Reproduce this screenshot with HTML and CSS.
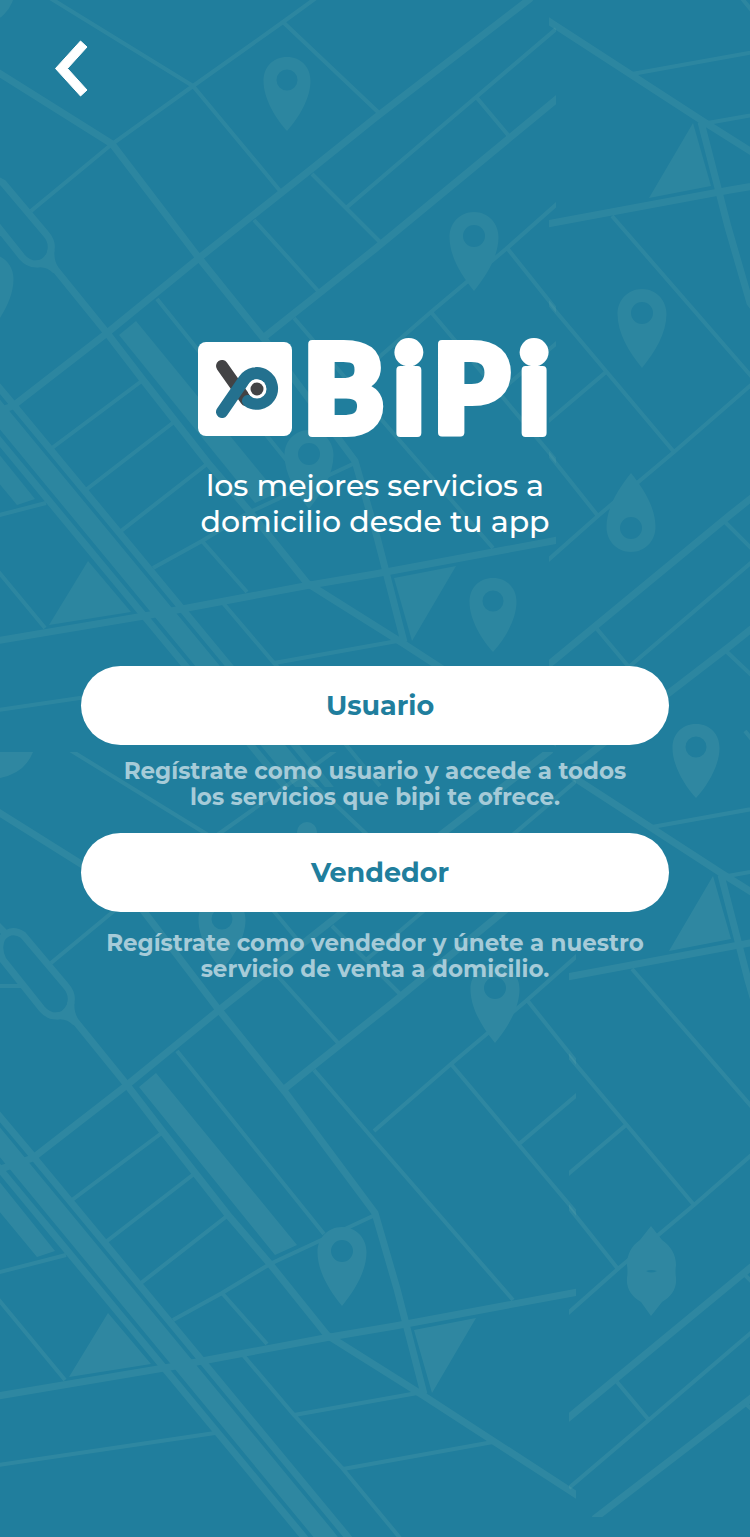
FILE: index.html
```html
<!DOCTYPE html>
<html lang="es">
<head>
<meta charset="utf-8">
<meta name="viewport" content="width=device-width, initial-scale=1">
<title>BiPi</title>
<link rel="stylesheet" href="styles.css">
</head>
<body>
<div class="screen">
  <svg class="map" viewBox="0 0 750 1537" preserveAspectRatio="xMidYMin slice" aria-hidden="true">
    <defs>
      <clipPath id="half"><rect x="-40" y="0" width="596" height="787"/></clipPath>
      <clipPath id="canvas"><rect x="0" y="0" width="750" height="1537"/></clipPath>
      <g id="streets" clip-path="url(#half)">
        <g class="street street-thin">
          <path d="M50-2L193 86M31 211L112 144L193 86L283 22L316-2M283 22L378 112M193 86L281 192"/>
          <path d="M556 29L475 98L346 208M477 98L508 135M312 174L380 242M254 220L319 292M157 299L304 482"/>
          <path d="M294 318L354 388L493 548M558 203L506 249L431 312L354 379M507 248L558 312M431 312L558 463M558 342L499 392"/>
          <path d="M-22 234H4M143 380L52 448M174 422L87 489M207 464L121 531M153 568L202 541L250 512L355 463M202 541L247 592"/>
          <path d="M46 503L-24 521M-22 547L45 628M223 603L274 663L403 640M274 663L323 717L380 786M323 717L473 690M-22 713L195 681"/>
        </g>
        <g class="street">
          <path d="M-25 58L112 144L199 258L265 340L355 461L377 537L404 642"/>
          <path d="M531-2L375 118L314 167L199 258L107 333L13 406L-22 418M558 98L375 249L263 338"/>
          <path d="M46 234Q54 243 50 254Q45 264 36 264Q28 264 22 257L-17 208Q-23 196-18 186Q-9 175 3 183ZM-28 168L-16 180"/>
          <path d="M51 250Q50 262 56 270L107 333L143 380L208 463L250 512L307 583L404 644L558 744"/>
          <path d="M36 264Q48 262 56 271M-22 644L150 615L310 585L375 574L558 540"/>
          <path d="M-36 398L283 784L290 793M7 397L327 784L334 793M-25 359L7 397"/>
        </g>
        <path class="avenue" d="M-36 371L305 784L312 793"/>
        <path class="block" d="M136 321L119 335L255 503L277 493ZM-30 418L-30 448L17 505L35 499ZM88 561L49 625L131 612ZM394 578L456 566L412 641Z"/>
      </g>
      <path id="pin" fill-rule="evenodd" d="M0-25C-14-25-24.500-14-24.500 0C-24.500 19-13 38 0 54C13 38 24.500 19 24.500 0C24.500-14 14-25 0-25ZM0-12A11 11 0 1 1 0 10A11 11 0 1 1 0-12Z"/>
      <path id="pin-small" fill-rule="evenodd" d="M0-23C-14-23-23.500-13-23.500 1C-23.500 18-12 38 0 51C12 38 23.500 18 23.500 1C23.500-13 14-23 0-23ZM0-10.500A10.500 10.500 0 1 1 0 10.500A10.500 10.500 0 1 1 0-10.500Z"/>
    </defs>
    <g clip-path="url(#canvas)">
      <g class="layer">
        <use href="#streets"/>
        <circle cx="-22" cy="-12" r="37"/>
        <use href="#pin-small" x="287" y="80"/>
        <use href="#pin-small" x="493" y="601"/>
        <use href="#pin" x="474" y="237"/>
        <use href="#pin" x="309" y="455"/>
        <use href="#pin" x="-11" y="279"/>
      </g>
      <g class="layer">
        <use href="#streets" transform="matrix(-1 0 0 -1 1105 764)"/>
        <use href="#pin" x="642" y="314"/>
        <use href="#pin" transform="translate(631 527) rotate(180)"/>
      </g>
      <g class="layer layer-low">
        <use href="#streets" x="20" y="752"/>
        <path d="M0 752H33Q25 773 0 778Z"/>
        <circle cx="307" cy="832" r="10"/>
        <use href="#pin-small" x="222" y="919"/>
        <use href="#pin" x="495" y="989"/>
        <use href="#pin" x="342" y="1252"/>
      </g>
      <g class="layer layer-low">
        <use href="#streets" transform="matrix(-1 0 0 -1 1125 1517)"/>
        <use href="#pin-small" x="696" y="747"/>
        <path fill-rule="evenodd" d="M651 1226L640 1240C631 1246 627 1255 627 1265Q628 1271 627 1278C626 1289 632 1297 641 1302L651 1316L662 1302C671 1297 677 1289 676 1278Q675 1271 676 1265C676 1255 671 1246 662 1240ZM646 1271Q651 1269 657 1271Q651 1274 646 1271Z"/>
      </g>
    </g>
  </svg>

  <header class="topbar">
    <button class="back" type="button" aria-label="Volver">
      <svg class="back-icon" viewBox="0 0 32 55" aria-hidden="true"><path d="M25.500 0L32 6L12.500 27.500L32 49L25.500 55L0.500 27.500Z"/></svg>
    </button>
  </header>

  <main class="content">
    <h1 class="brand">
      <svg class="brand-logo" viewBox="198 341 354 96" role="img" aria-label="BiPi">
        <rect class="brand-white" x="198" y="342" width="94" height="94" rx="8"/>
        <path class="brand-rod" d="M222 366L246 400"/>
        <path class="brand-loop" d="M222 412L244 380A15.300 15.300 0 1 1 248 401"/>
        <circle class="brand-white" cx="257" cy="389" r="9.500"/>
        <circle class="brand-dark" cx="257" cy="389" r="6.500"/>
        <text class="brand-name" x="303" y="433" dx="0 10 9 9">BiPi</text>
      </svg>
    </h1>
    <p class="tagline">los mejores servicios a<br>domicilio desde tu app</p>

    <div class="options">
      <section class="option">
        <button class="choice" type="button" aria-describedby="user-note">Usuario</button>
        <p class="note" id="user-note">Regístrate como usuario y accede a todos<br>los servicios que bipi te ofrece.</p>
      </section>
      <section class="option option-seller">
        <button class="choice" type="button" aria-describedby="seller-note">Vendedor</button>
        <p class="note" id="seller-note">Regístrate como vendedor y únete a nuestro<br>servicio de venta a domicilio.</p>
      </section>
    </div>
  </main>
</div>
</body>
</html>
```

FILE: styles.css
```css
* {
  box-sizing: border-box;
}

body {
  margin: 0;
  background: #207e9d;
  color: #fff;
  font-family: Montserrat, Inter, "Open Sans", sans-serif;
}

.screen {
  position: relative;
  min-height: 100vh;
  overflow: hidden;
}

.map {
  position: absolute;
  inset: 0;
  width: 100%;
  height: 100%;
}

.layer {
  opacity: 0.08;
  fill: #b6e2c3;
  stroke: none;
}

.layer-low {
  opacity: 0.09;
  fill: #c2e8cc;
}

.street,
.avenue {
  fill: none;
  stroke: #bce5c8;
  stroke-width: 7;
}

.street-thin {
  stroke-width: 4;
}

.avenue {
  stroke-width: 19;
}

.topbar,
.content {
  position: relative;
}

.topbar {
  display: flex;
  padding: 41px 55px 0;
}

.back {
  display: flex;
  padding: 0;
  border: 0;
  background: none;
  cursor: pointer;
}

.back-icon {
  width: 32px;
  height: 55px;
  fill: #fff;
  stroke: #fff;
  stroke-width: 1;
  overflow: visible;
}

.content {
  display: flex;
  flex-direction: column;
  align-items: center;
  padding: 245px 81px 60px;
}

.brand {
  display: flex;
  margin: 0;
}

.brand-logo {
  width: 354px;
  height: 96px;
  overflow: visible;
}

.brand-white {
  fill: #fff;
}

.brand-dark {
  fill: #434345;
}

.brand-rod,
.brand-loop {
  fill: none;
  stroke-width: 12;
  stroke-linecap: round;
}

.brand-rod {
  stroke: #434345;
}

.brand-loop {
  stroke: #24718f;
}

.brand-name {
  fill: #fff;
  stroke: #fff;
  stroke-width: 8;
  stroke-linejoin: round;
  font-family: Lato, sans-serif;
  font-size: 122px;
  font-weight: 900;
}

.tagline {
  margin: 31px 0 0;
  font-size: 30px;
  font-weight: 500;
  line-height: 36px;
  text-align: center;
}

.options {
  display: flex;
  flex-direction: column;
  gap: 23px;
  width: 100%;
  margin-top: 126px;
}

.option {
  display: flex;
  flex-direction: column;
  gap: 13px;
}

.option-seller {
  gap: 18px;
}

.choice {
  height: 79px;
  padding: 0 0 0 10px;
  border: 0;
  border-radius: 40px;
  background: #fff;
  color: #207e9d;
  font-family: inherit;
  font-size: 27px;
  font-weight: 700;
  cursor: pointer;
}

.note {
  margin: 0;
  color: #a6cbd8;
  font-size: 23px;
  font-weight: 700;
  line-height: 26px;
  text-align: center;
}
```
